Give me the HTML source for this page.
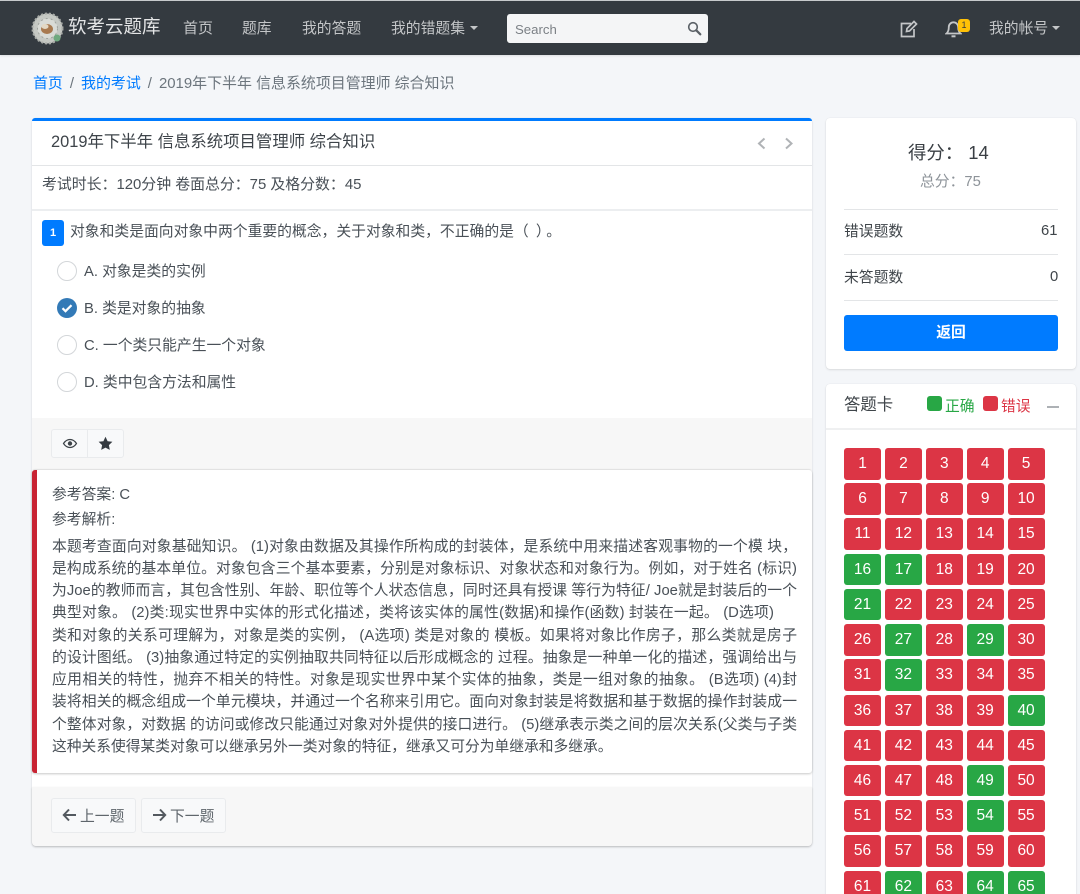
<!DOCTYPE html>
<html lang="zh">
<head>
<meta charset="utf-8">
<title>软考云题库</title>
<style>
*{box-sizing:border-box}
html,body{margin:0;padding:0;width:1080px;height:894px;overflow:hidden;background:#f4f6f9}
body{position:relative;font-family:"Liberation Sans","Noto Sans CJK SC",sans-serif;font-size:14.8px;color:#495057}
.a{position:absolute;white-space:nowrap}
.t{position:absolute;white-space:nowrap;line-height:22px}
#nav{left:0;top:1px;width:1080px;height:54px;background:#343a40;box-shadow:0 1px 2px rgba(0,0,0,.1)}
.nl{position:absolute;white-space:nowrap;color:#c4c6c8;font-size:14.8px;line-height:22px;top:18px}
.caret{position:absolute;width:0;height:0;border-left:4.5px solid transparent;border-right:4.5px solid transparent;border-top:4.5px solid #c4c6c8}
.card{position:absolute;background:#fff;border-radius:4px;box-shadow:0 0 1px rgba(0,0,0,.1),0 1px 2px rgba(0,0,0,.1)}
.hr{position:absolute;height:1px;background:#e3e5e7}
.radio{position:absolute;left:57px;width:20px;height:20px;border-radius:50%;border:1px solid #d3d6d9;background:#fff}
.op{position:absolute;left:84px;white-space:nowrap;line-height:22px}
.btn{position:absolute;background:#f8f9fa;border:1px solid #e9ebed;border-radius:3px}
.ex{position:absolute;left:52px;width:745px;white-space:normal;line-height:22px;text-align:justify;text-align-last:justify;color:#495057;height:22px;overflow:hidden}
#grid{position:absolute;left:844px;top:448px;display:grid;grid-template-columns:repeat(5,37px);grid-auto-rows:31.5px;column-gap:3.9px;row-gap:3.72px}
#grid div{background:#dc3545;color:#fff;border-radius:3px;text-align:center;line-height:31px;font-size:15.5px}
#grid div.g{background:#28a745}
</style>
</head>
<body>
<div class="a" style="left:0;top:0;width:1080px;height:1px;background:#c9ccce"></div>
<div class="a" id="nav"></div>

<svg class="a" style="left:31px;top:12px" width="33" height="33" viewBox="0 0 33 33">
<circle cx="16.5" cy="16.5" r="15" fill="#c5c8c3"/>
<circle cx="16.5" cy="16.5" r="15" fill="none" stroke="#a9aca8" stroke-width="2" stroke-dasharray="2 2"/>
<circle cx="16.5" cy="16.5" r="10" fill="#d9dbd6" stroke="#9fa39e" stroke-width="1" stroke-dasharray="2 3"/>
<ellipse cx="16" cy="17" rx="6" ry="5" fill="#a8794f"/>
<ellipse cx="14" cy="14.5" rx="3.5" ry="2.5" fill="#e3d8c4"/>
<circle cx="26" cy="26" r="3.5" fill="#6fa97f"/>
</svg>
<div class="t" style="left:68px;top:15px;font-size:18.5px;line-height:24px;color:#e4e5e6">软考云题库</div>
<div class="nl" style="left:183px;font-size:15px">首页</div>
<div class="nl" style="left:242px">题库</div>
<div class="nl" style="left:302px">我的答题</div>
<div class="nl" style="left:391px">我的错题集</div>
<div class="caret" style="left:470px;top:26px"></div>

<div class="a" style="left:507px;top:14px;width:201px;height:29px;background:#f4f5f6;border-radius:3px"></div>
<div class="t" style="left:515px;top:19px;font-size:13.2px;color:#7c8186">Search</div>
<svg class="a" style="left:687px;top:21px" width="15" height="15" viewBox="0 0 15 15" fill="none" stroke="#5a6066"><circle cx="6" cy="6" r="4.300" stroke-width="1.600"/><path d="M9.300 9.300L13.300 13.300" stroke-width="2.200" stroke-linecap="round"/></svg>

<svg class="a" style="left:900px;top:20px" width="19" height="18" viewBox="0 0 19 18" fill="none" stroke="#c4c6c8" stroke-width="1.700"><path d="M11 3.500H1.500v13h12.500V9"/><path d="M6.500 11.500l.5-3L14 1.500l2.500 2.500-7 7z" fill="#343a40"/></svg>
<svg class="a" style="left:945px;top:20px" width="17" height="18" viewBox="0 0 17 18" fill="none" stroke="#c4c6c8" stroke-width="1.800"><path d="M1.500 13.500c1.700-1.500 2.300-3 2.300-6.500a4.700 4.700 0 0 1 9.400 0c0 3.500.6 5 2.300 6.500z"/><path d="M6.500 16.300h4" stroke-width="2"/></svg>
<div class="a" style="left:958px;top:19px;width:12px;height:13px;background:#ffc107;border-radius:3px;color:#343a40;font-size:9px;line-height:13px;text-align:center">1</div>
<div class="nl" style="left:989px">我的帐号</div>
<div class="caret" style="left:1052px;top:26px"></div>

<div class="t" style="left:33px;top:73px;font-size:14.95px"><span style="color:#007bff">首页</span><span style="color:#6c757d;padding:0 7px">/</span><span style="color:#007bff">我的考试</span><span style="color:#6c757d;padding:0 7px">/</span><span style="color:#6c757d">2019年下半年 信息系统项目管理师 综合知识</span></div>

<!-- Main card -->
<div class="card" style="left:32px;top:118px;width:780px;height:728px"></div>
<div class="a" style="left:32px;top:118px;width:780px;height:3px;background:#007bff;border-radius:3px 3px 0 0"></div>
<div class="t" style="left:51px;top:131px;font-size:16.4px;color:#3e444a">2019年下半年 信息系统项目管理师 综合知识</div>
<svg class="a" style="left:755px;top:136px" width="42" height="15" viewBox="0 0 42 15" fill="none" stroke="#b0b3b6" stroke-width="2"><path d="M9.500 2.500L4 7.500l5.500 5"/><path d="M31 2.500l5.500 5-5.500 5"/></svg>
<div class="hr" style="left:32px;top:165px;width:780px"></div>
<div class="t" style="left:42px;top:174px;font-size:14.9px">考试时长：120分钟 卷面总分：75 及格分数：45</div>
<div class="hr" style="left:32px;top:209px;width:780px;height:2px;background:#eceef0"></div>

<div class="a" style="left:42px;top:220px;width:22px;height:26px;background:#007bff;border-radius:3px;color:#fff;font-size:11px;font-weight:bold;line-height:26px;text-align:center">1</div>
<div class="t" style="left:70px;top:221px;font-size:14.8px">对象和类是面向对象中两个重要的概念，关于对象和类，不正确的是（ <span style="margin-left:3px"></span>）<span style="margin-left:3px"></span>。</div>

<div class="radio" style="top:261px"></div>
<div class="op" style="top:261px">A. 对象是类的实例</div>
<svg class="a" style="left:57px;top:298px" width="20" height="20" viewBox="0 0 20 20"><circle cx="10" cy="10" r="10" fill="#337ab7"/><path d="M5.500 10.200l3 3 6-6" fill="none" stroke="#fff" stroke-width="2.200"/></svg>
<div class="op" style="top:298px">B. 类是对象的抽象</div>
<div class="radio" style="top:335px"></div>
<div class="op" style="top:335px">C. 一个类只能产生一个对象</div>
<div class="radio" style="top:372px"></div>
<div class="op" style="top:372px">D. 类中包含方法和属性</div>

<div class="a" style="left:32px;top:418px;width:780px;height:52px;background:#f7f7f7"></div>
<div class="btn" style="left:51px;top:429px;width:37px;height:29px;border-radius:3px 0 0 3px"></div>
<div class="btn" style="left:87px;top:429px;width:37px;height:29px;border-radius:0 3px 3px 0"></div>
<svg class="a" style="left:62px;top:437px" width="16" height="13" viewBox="0 0 16 13"><path d="M1.500 6.500C3.300 3.800 5.400 2.500 8 2.500s4.700 1.300 6.500 4C12.700 9.200 10.600 10.500 8 10.500S3.300 9.200 1.500 6.500z" fill="none" stroke="#3d4348" stroke-width="1.200"/><circle cx="8" cy="6.500" r="2.200" fill="#3d4348"/></svg>
<svg class="a" style="left:98px;top:436px" width="15" height="15" viewBox="0 0 15 15"><path d="M7.500 .8l2.100 4.400 4.800.6-3.500 3.300.9 4.800-4.300-2.300-4.300 2.300.9-4.800L.6 5.800l4.800-.6z" fill="#343a40"/></svg>

<!-- Explanation -->
<div class="card" style="left:32px;top:470px;width:780px;height:303px;border-left:5px solid #c82333;border-radius:3px;box-shadow:0 -1px 1px rgba(0,0,0,.08),0 1px 2px rgba(0,0,0,.22)"></div>
<div class="t" style="left:52px;top:484px">参考答案: C</div>
<div class="t" style="left:52px;top:509px">参考解析:</div>
<div class="ex" style="top:536px">本题考查面向对象基础知识。 (1)对象由数据及其操作所构成的封装体，是系统中用来描述客观事物的一个模 块，</div>
<div class="ex" style="top:558px">是构成系统的基本单位。对象包含三个基本要素，分别是对象标识、对象状态和对象行为。例如，对于姓名 (标识)</div>
<div class="ex" style="top:580px">为Joe的教师而言，其包含性别、年龄、职位等个人状态信息，同时还具有授课 等行为特征/ Joe就是封装后的一个</div>
<div class="ex" style="top:602px;width:722px">典型对象。 (2)类:现实世界中实体的形式化描述，类将该实体的属性(数据)和操作(函数) 封装在一起。 (D选项)</div>
<div class="ex" style="top:625px">类和对象的关系可理解为，对象是类的实例， (A选项) 类是对象的 模板。如果将对象比作房子，那么类就是房子</div>
<div class="ex" style="top:647px">的设计图纸。 (3)抽象通过特定的实例抽取共同特征以后形成概念的 过程。抽象是一种单一化的描述，强调给出与</div>
<div class="ex" style="top:669px">应用相关的特性，抛弃不相关的特性。对象是现实世界中某个实体的抽象，类是一组对象的抽象。 (B选项) (4)封</div>
<div class="ex" style="top:691px">装将相关的概念组成一个单元模块，并通过一个名称来引用它。面向对象封装是将数据和基于数据的操作封装成一</div>
<div class="ex" style="top:714px">个整体对象，对数据 的访问或修改只能通过对象对外提供的接口进行。 (5)继承表示类之间的层次关系(父类与子类</div>
<div class="t" style="left:52px;top:736px;font-size:14.75px;color:#495057">这种关系使得某类对象可以继承另外一类对象的特征，继承又可分为单继承和多继承。</div>

<div class="a" style="left:32px;top:787px;width:780px;height:59px;background:#f7f7f7;border-radius:0 0 4px 4px;box-shadow:0 1px 2px rgba(0,0,0,.14)"></div>
<div class="btn" style="left:51px;top:798px;width:85px;height:35px"></div>
<div class="btn" style="left:141px;top:798px;width:85px;height:35px"></div>
<svg class="a" style="left:62px;top:808px" width="15" height="14" viewBox="0 0 15 14" fill="none" stroke="#53595f" stroke-width="2"><path d="M7 1.500L1.800 7 7 12.500M2 7h12"/></svg>
<div class="t" style="left:80px;top:806px;font-size:14.8px;color:#5f666c">上一题</div>
<svg class="a" style="left:152px;top:808px" width="15" height="14" viewBox="0 0 15 14" fill="none" stroke="#53595f" stroke-width="2"><path d="M8 1.500L13.200 7 8 12.500M13 7H1"/></svg>
<div class="t" style="left:170px;top:806px;font-size:14.8px;color:#5f666c">下一题</div>

<!-- Score card -->
<div class="card" style="left:826px;top:118px;width:250px;height:251px"></div>
<div class="t" style="left:908px;top:141px;font-size:18.4px;line-height:24px;color:#3a3f44">得分： 14</div>
<div class="t" style="left:920px;top:171px;color:#8d9399">总分：75</div>
<div class="hr" style="left:844px;top:209px;width:214px"></div>
<div class="t" style="left:844px;top:221px;color:#3f454a">错误题数</div>
<div class="t" style="left:1041px;top:220px;color:#3f454a">61</div>
<div class="hr" style="left:844px;top:254px;width:214px"></div>
<div class="t" style="left:844px;top:267px;color:#3f454a">未答题数</div>
<div class="t" style="left:1050px;top:266px;color:#3f454a">0</div>
<div class="hr" style="left:844px;top:300px;width:214px"></div>
<div class="a" style="left:844px;top:315px;width:214px;height:36px;background:#007bff;border-radius:3px;color:#fff;font-weight:bold;text-align:center;line-height:36px">返回</div>

<!-- Answer card -->
<div class="card" style="left:826px;top:384px;width:250px;height:530px"></div>
<div class="t" style="left:844px;top:394px;font-size:16.4px;color:#3f454a">答题卡</div>
<div class="a" style="left:927px;top:396px;width:15px;height:15px;background:#28a745;border-radius:3px"></div>
<div class="t" style="left:945px;top:396px;color:#28a745">正确</div>
<div class="a" style="left:983px;top:396px;width:15px;height:15px;background:#dc3545;border-radius:3px"></div>
<div class="t" style="left:1001px;top:396px;color:#dc3545">错误</div>
<div class="a" style="left:1047px;top:406px;width:12px;height:2px;background:#adb1b5"></div>
<div class="hr" style="left:826px;top:428px;width:250px;height:2px;background:#eff0f1"></div>

<div id="grid">
<div>1</div><div>2</div><div>3</div><div>4</div><div>5</div>
<div>6</div><div>7</div><div>8</div><div>9</div><div>10</div>
<div>11</div><div>12</div><div>13</div><div>14</div><div>15</div>
<div class="g">16</div><div class="g">17</div><div>18</div><div>19</div><div>20</div>
<div class="g">21</div><div>22</div><div>23</div><div>24</div><div>25</div>
<div>26</div><div class="g">27</div><div>28</div><div class="g">29</div><div>30</div>
<div>31</div><div class="g">32</div><div>33</div><div>34</div><div>35</div>
<div>36</div><div>37</div><div>38</div><div>39</div><div class="g">40</div>
<div>41</div><div>42</div><div>43</div><div>44</div><div>45</div>
<div>46</div><div>47</div><div>48</div><div class="g">49</div><div>50</div>
<div>51</div><div>52</div><div>53</div><div class="g">54</div><div>55</div>
<div>56</div><div>57</div><div>58</div><div>59</div><div>60</div>
<div>61</div><div class="g">62</div><div>63</div><div class="g">64</div><div class="g">65</div>
</div>
</body>
</html>
